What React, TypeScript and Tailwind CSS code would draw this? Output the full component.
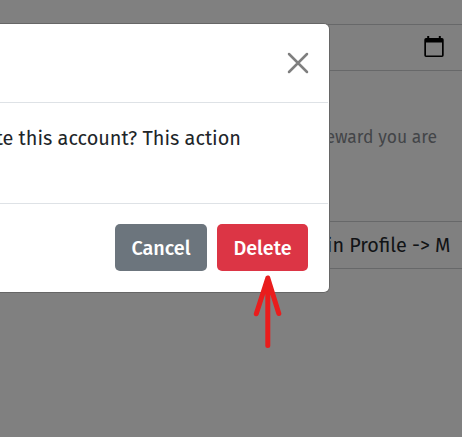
function CalendarIcon() {
  return (
    <svg width="20" height="22" viewBox="0 0 20 22" fill="none">
      <path d="M3.2 0h2v2h9.600V0h2v2H18a1.700 1.700 0 0 1 1.700 1.700V19.300A1.700 1.700 0 0 1 18 21H2a1.700 1.700 0 0 1-1.700-1.700V3.700A1.700 1.700 0 0 1 2 2h1.200zM2 6.500v12.900h16V6.500z" fill="#000" fillRule="evenodd" />
    </svg>
  );
}

function Page() {
  return (
    <div className="flex h-[437px] flex-col bg-[#808080] pt-6">
      <div className="flex h-[47px] items-center justify-end border-y border-[#676869] pb-px pr-[18px]">
        <CalendarIcon />
      </div>
      <p className="mt-[54px] flex h-[26px] items-center justify-end whitespace-nowrap pr-[25px] text-[17.5px] text-[#434548]">
        reward you are
      </p>
      <div className="mt-[70px] flex h-12 items-center justify-end whitespace-pre border-y border-[#676869] pr-[11.5px] pt-0.5 text-[19.8px] text-[#111315]">
        in Profile -&gt; M
      </div>
    </div>
  );
}

function Modal() {
  return (
    <div className="absolute left-0 top-[23px] flex h-[270px] w-[330px] flex-col overflow-hidden rounded-r-[6px] border-y border-r border-[#666] bg-white">
      <header className="mr-px flex h-[79px] shrink-0 items-center justify-end border-b border-[#dee2e6] pr-[19px]">
        <svg width="22" height="22" viewBox="0 0 22 22" fill="none" stroke="#7f7f7f" strokeWidth="2.5" strokeLinecap="round">
          <path d="M2 2l18 18M20 2L2 20" />
        </svg>
      </header>
      <div className="mr-px flex h-[101px] shrink-0 justify-end border-b border-[#dee2e6] pr-[87px] pt-[20px]">
        <p className="whitespace-nowrap text-[19.9px] leading-[30px] text-[#212529]">te this account? This action</p>
      </div>
      <footer className="flex gap-[10px] pl-[115px] pt-5 text-[19.8px] font-medium text-white">
        <button className="h-[47px] w-[92px] rounded-[5px] bg-[#6c757d] pt-0.5">Cancel</button>
        <button className="h-[47px] w-[91px] rounded-[5px] bg-[#dc3545] pt-0.5">Delete</button>
      </footer>
    </div>
  );
}

export default function App() {
  return (
    <main className="relative h-[437px] w-[462px] overflow-hidden font-['Fira_Sans','Noto_Sans',sans-serif]">
      <Page />
      <Modal />
      <svg className="absolute left-[252px] top-[273px]" width="32" height="78" viewBox="0 0 32 78" fill="none" stroke="#e91d1d" strokeWidth="5" strokeLinecap="round" strokeLinejoin="round">
        <path d="M15.800 5v67.500M4.300 40.800L15.800 5l11 35.500" />
      </svg>
    </main>
  );
}
